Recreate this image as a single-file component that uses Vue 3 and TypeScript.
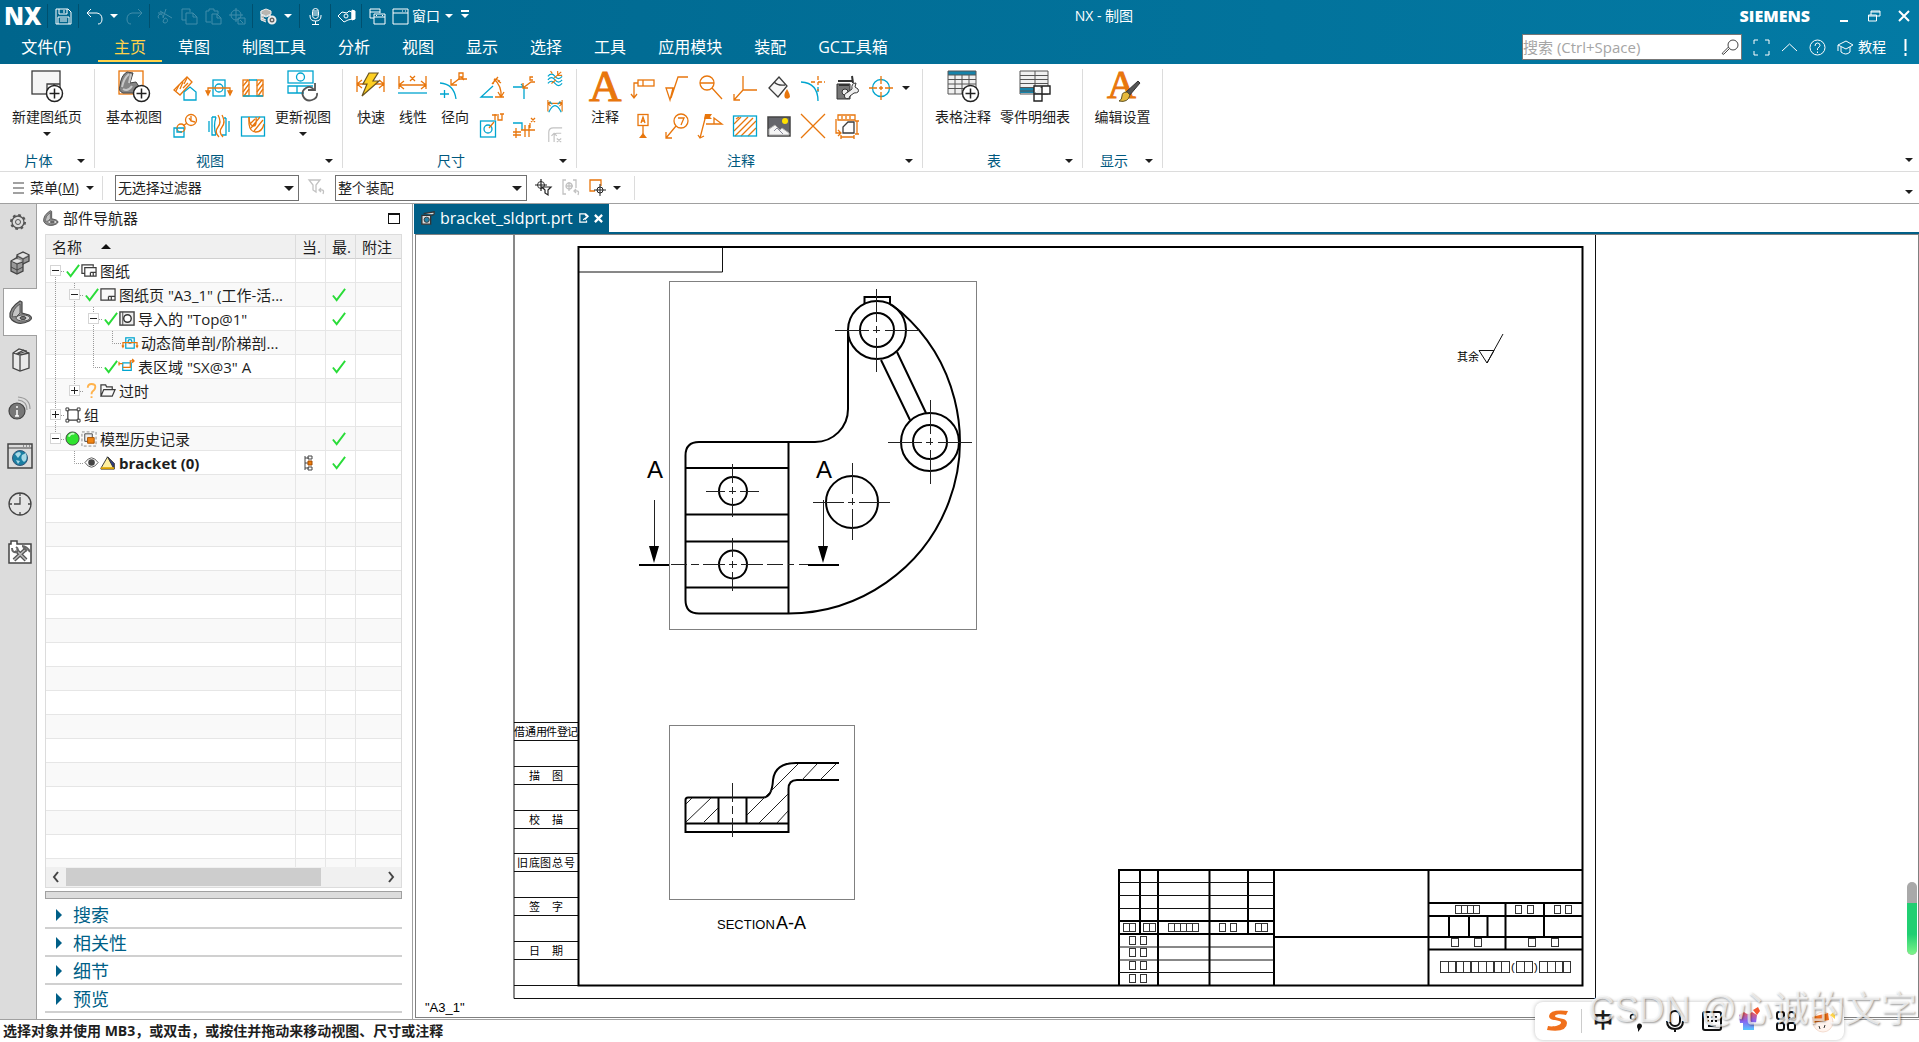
<script setup lang="ts">
import { ref } from 'vue'

const O = 'stroke="#e8760c" stroke-width="1.3"'
const B = 'stroke="#00a5cf" stroke-width="1.3"'
const D = 'stroke="#3c3c3c" stroke-width="1.3"'
const G = 'stroke="#c2c2c2" stroke-width="1.3"'
const OF = 'fill="#e8760c" stroke="none"'

const icons: Record<string, string> = {
  save: '<path d="M1 1h12l3 3v12H1zM4 1v5h8V1M9 2v3M3 16V9h11v7M5 11h7M5 13h7"/>',
  undo: '<path d="M5 1L1 5l4 4M1 5h10q5 1 5 6t-4 5"/>',
  redo: '<path d="M12 1l4 4-4 4M16 5H6q-5 1-5 6t4 5"/>',
  cut: '<path d="M3 3l12 7M9 1l-3 9M6 9.500a2.500 2.500 0 1 0-4 1M8 10a2.500 2.500 0 1 1-2 4q0-2 2-4M1 5h5"/>',
  copy: '<path d="M5 12H1V1h8v3M5 5h7l4 4v7H5zM12 5v4h4"/>',
  paste: '<path d="M6 14H1V3h3V1h5v2h4v3M7 6h5l4 4v6H7zM12 6v4h4"/>',
  target: '<circle cx="7" cy="7" r="5"/><path d="M0 7h14M7 0v14M9 10h7v6H9zM11 12l3 3"/>',
  assembly: '<path d="M1 3l5-2 5 2v3l-5 2-5-2zM1 7l5 2 5-2M1 10l5 2M1 3v9l5 2" fill="#b9b5b0" stroke="#eee" stroke-width="1"/><circle cx="12" cy="12" r="3.500" fill="#666" stroke="#eee" stroke-width="2"/><circle cx="12" cy="12" r="1" fill="#fff" stroke="none"/>',
  mic: '<rect x="5.500" y="0.500" width="6" height="10" rx="3"/><path d="M3 7v1q0 5 5.500 5T14 8V7M8.500 13v3.500M5 16.500h7M6 3h5M6 5h5M6 7h5"/>',
  touch: '<path d="M0 8l4-4 5 1 2-2 3 1v7l-4 1-4 2-3-3z"/><path d="M14 2l3 1v8l-3 1z" fill="#fff"/><circle cx="8" cy="8" r="2"/>',
  windows: '<path d="M5 10H1V1h10v4M1 4h10M5 6h11v10H5zM5 9h11M7 7.500h1M13 7.500h1"/>',
  window: '<path d="M1 1h15v15H1zM1 5h15M10 3h1M13 3h1"/>',
  zoomer: '<circle cx="11" cy="6" r="5"/><path d="M7.500 9.500L2 15q-1 1-1.500 0t.5-1.500L6.500 8"/>',
  full: '<path d="M1 5V1h4M12 1h4v4M16 12v4h-4M5 16H1v-4"/>',
  up: '<path d="M1 12l7.500-7 7.500 7"/>',
  cap: '<path d="M1 6l8-4 7 4-7 4zM4 8v5q5 4 9 0V8M1 6v6"/>',
  newsheet: `<rect x="1" y="1" width="28" height="23" fill="#f5f5f5" ${D}/><path d="M16 24V14h13M16 19h13M23 14v10" ${D}/><circle cx="23.500" cy="23.500" r="8" fill="#fff" stroke="#222" stroke-width="1.500"/><path d="M18.500 23.500h10M23.500 18.500v10" stroke="#222" stroke-width="1.500"/>`,
  baseview: `<rect x="1" y="1" width="24" height="23" ${O}/><path d="M2 16Q3 5 9 2l6 1-3 10 6-1 4 6-5 5H5q-5-2-3-7z" fill="#858585" stroke="#444"/><path d="M4 17Q6 8 11 4M5 19q5 3 9-3M13 4l-2 9" stroke="#c8c8c8" stroke-width="2"/><circle cx="23.500" cy="23.500" r="8" fill="#fff" stroke="#222" stroke-width="1.500"/><path d="M18.500 23.500h10M23.500 18.500v10" stroke="#222" stroke-width="1.500"/>`,
  update: `<rect x="1" y="1" width="25" height="12" ${B}/><circle cx="13.500" cy="7" r="4" ${B}/><path d="M17 23H1v-7h25M10 16v7" ${B}/><path d="M28 13v7h-7M27 20q-3-5-8-2t-3 8q3 6 9 4t5-7" stroke="#555" stroke-width="1.800"/>`,
  v1: `<path d="M1 14L14 1l5 5L7 19z" ${O}/><path d="M3 15l3-6M7 13l3-7M11 8l3-6M15 7l-5 5" ${O}/><path d="M11 24v-8l6-5 6 5v8z" fill="#fff" ${B}/>`,
  v2: `<rect x="6" y="4" width="12" height="16" ${B}/><circle cx="12" cy="12" r="4" ${B}/><path d="M1 17v-5h22v5M-1 15l2 4 2-4zM21 15l2 4 2-4z" ${O}/>`,
  v3: `<rect x="2" y="4" width="6" height="16" ${O}/><rect x="16" y="4" width="6" height="16" ${O}/><path d="M2 10l5-6M2 16L8 8M3 20l5-7M16 10l5-6M16 16l6-8M17 20l5-7" ${O}/><path d="M8 4h8M2 20h20" ${B}/>`,
  v4: `<path d="M1 23V14h10v9z" ${B}/><circle cx="8" cy="14" r="4" ${O}/><circle cx="18" cy="6" r="5.500" ${O}/><path d="M10 12l4-3M18 2v5l4 1M16 4l2 3" ${O}/><path d="M4 14v4h5" ${B}/>`,
  v5: `<path d="M2 7v11M5 3v18h4M5 3h4M9 3q-3 9 0 18M22 7v11M19 4v17h-4M19 4h-2" ${B}/><path d="M11 1q4 7 0 12t1 10M15 1q4 7 0 12t1 10" ${O}/>`,
  v6: `<rect x="0.500" y="3" width="23" height="19" ${B}/><path d="M8 3v7q1 8 7 8t8-8" ${O}/><path d="M8 3q0 8 4 9t3-9M9 10l5-5M10 14l9-11M13 17L22 6" ${O}/>`,
  rapid: `<path d="M1 6v16M28 6v16M1 14h27M6 10l-5 4 5 4M23 10l5 4-5 4" ${O}/><path d="M13 3h9l-5 8h6L6 26l5-12H7z" fill="#ffd022" stroke="#6a5520" stroke-width="1.200"/>`,
  linear: `<path d="M1 6v13M28 6v13M1 15h27M6 11l-5 4 5 4M23 11l5 4-5 4M12 6l5 5M17 6l-5 5" ${O}/><path d="M0 23h29" ${B}/>`,
  radial: `<path d="M1 13q14 1 16 16M1 24h9M5.500 20v8" ${B}/><path d="M12 15l8-6h8M12 9v6h6" ${O}/><path d="M20 10V3h4v4h-4M22 7l3 3" ${O}/>`,
  d1: `<path d="M13 10L1 21h12" ${B}/><path d="M14 3q8 7 7 18M12 8l6-7M15 21h9M18 5l3 2M18 16l3 5 3-5M13 8l2-5 5 2" ${O}/>`,
  d2: `<path d="M1 11h11v12M12 11l-3-3" ${B}/><path d="M11 12l8-6h4M11 7v5h5M21 1h-3v3h3" ${O}/>`,
  d3: `<path d="M1 6q4-5 8 0t8 0M1 10q4-5 8 0t8 0M1 14q4-5 8 0t8 0" ${B}/><path d="M8 8l8-7M12 0v5h5M4 0l2 3M5 14l5-4" ${O}/>`,
  d4: `<rect x="0.500" y="7" width="15" height="16" ${B}/><circle cx="8" cy="15" r="4" ${B}/><path d="M9 14l5-6M15 0v6M18 0v6h4V0M12 1h5M20 0h4" ${O}/>`,
  d5: `<path d="M1 9h9v7" ${B}/><path d="M9 16h14M13 11v12M17 11v12M1 18h8M1 21h8M4 14v10M18 9v5M19 4l4 4M23 4l-4 4" ${O}/>`,
  d6: `<path d="M1 1v13M17 1v13M1 5h16M4 3L1 5l3 3M14 3l3 2-3 3" ${O}/><path d="M2 15Q9 0 16 15M6 6L3 3M12 6l3-3" ${B}/>`,
  d7: `<path d="M2 17V6q0-5 5-5h10M8 17V10q0-3 3-3h5M5 10l3-3 3 3M11 13l5 4M16 13l-5 4" ${G}/>`,
  bigA: '<text x="0" y="31" font-family="Liberation Serif" font-size="45" fill="#e8760c" stroke="#e8760c" stroke-width="1">A</text>',
  n1: `<rect x="7" y="4" width="16" height="6" ${O}/><path d="M7 7H3v14M0 18l3 4 3-4M12 4v6" ${O}/>`,
  n2: `<path d="M1 12h7L5 24zM6 22L13 1h10" ${O}/>`,
  n3: `<circle cx="8" cy="7" r="7" ${O}/><path d="M1 7h14M13 12l10 11" ${O}/>`,
  n4: `<path d="M10 0v14h14M10 14L1 24M1 18v6h6" ${O}/>`,
  n5: `<path d="M2 12L12 1l8 9-9 11z" fill="#f7f7f7" ${D}/><path d="M7 6q4 4 11 3" ${D}/><path d="M20 13q-4 6-2 9 3 2 5-1 0-3-3-8z" ${OF}/>`,
  n6: `<path d="M0 6q17 1 17 19M17 11v5" ${B}/><path d="M17 0v9M10 6h4M17 6h7M17 13v2" ${O} stroke-dasharray="4 2"/>`,
  n7: '<path d="M2 8h13v15H2z" fill="#777" stroke="#333"/><path d="M3 5h14M17 0l1 7M4 9h10" stroke="#333" stroke-width="2"/><circle cx="10" cy="16" r="3" fill="#eee" stroke="#333"/><path d="M10 22q-2-4 3-6l4-3q-1-6 4-6l-1 4 3 2q2 4-4 4l-4 3q-1 4-5 2z" fill="#eee" stroke="#333"/>',
  n8: `<circle cx="12" cy="12" r="8.500" ${B}/><path d="M0 12h8M16 12h8M12 0v8M12 16v8M10 12h4M12 10v4" ${O}/>`,
  n9: `<rect x="7" y="0.500" width="10" height="11" ${O}/><path d="M12 12v8M10 9l2-6 2 6M10 7h4" ${O}/><path d="M8 24l4-5 4 5z" ${OF}/>`,
  n10: `<circle cx="16" cy="7" r="7" ${O}/><path d="M13 4h6l-3 7M11 12L1 24M1 18v6h6" ${O}/>`,
  n11: `<path d="M7 1L1 24M-1 21l2 3 4-2M7 10h16L15 4v6" ${O}/><path d="M6 0h7l-2 3 2 2H5z" ${OF}/>`,
  n12: `<path d="M1 10l7-7M1 17L15 3M2 22L20 4M8 22L23 7M15 22l8-8M3 5l3-2" ${O}/><rect x="0.500" y="2" width="23" height="20" ${B}/>`,
  n13: '<rect x="1" y="3" width="22" height="19" fill="#65666c" stroke="#444" stroke-width="1.500"/><circle cx="18" cy="7" r="3" fill="#ffe100" stroke="none"/><path d="M2 21v-6l6-4 5 5 2-2 7 5v2z" fill="#f5f5f5" stroke="#aaa"/><path d="M7 17l3-3 6 6" stroke="#889"/>',
  n14: `<path d="M0 0l24 24M24 0L0 24" ${O}/>`,
  n15: `<path d="M3 1h17v5H3zM7 2v3M11 2v3M15 2v3M1 5v14h5M3 16l3 3-3 3M22 7v13M20 7h4M20 20h4M6 23h13M6 21v4M19 21v4" ${O}/><path d="M8 19v-6l5-5h6v11z" ${D}/>`,
  table: '<path d="M1 1h28v23H1z" fill="#f0f0f0"/><path d="M1 1h28v4H1z" fill="#1683aa"/><path d="M1 1h28v23H1zM1 5h28M1 9.500h28M1 14h28M1 18.500h28M8 5v19M15 5v19M22 5v19" stroke="#555"/><circle cx="23.500" cy="23.500" r="8" fill="#fff" stroke="#222" stroke-width="1.500"/><path d="M18.500 23.500h10M23.500 18.500v10" stroke="#222" stroke-width="1.500"/>',
  parts: '<path d="M1 1h28v23H1z" fill="#f0f0f0" stroke="#555"/><path d="M1 17h16v6H1z" fill="#1683aa"/><path d="M1 5.500h28M1 9.500h28M1 13.500h28M1 17.500h28M1 21h16M16 1v22" stroke="#555"/><path d="M15 16h16v8h-8v7h-8zM15 24h8V16" fill="#fff" stroke="#222" stroke-width="1.400"/>',
  settings: '<text x="0" y="28" font-family="Liberation Serif" font-size="40" fill="#e8760c" stroke="#e8760c">A</text><path d="M31 11l2 2-11 13-4-3z" fill="#555" stroke="#333"/><path d="M20 22l3 3q-2 8-11 6 3-1 3-5t5-4z" fill="#e5b93c" stroke="#5f5122"/>',
  menu: '<path d="M1 3h11M1 8h11M1 13h11" stroke="#444" stroke-width="1.200"/>',
  filter: `<path d="M1 1h11L8 6v7l-3-2V6zM15 15q2-5-3-4M13 9l-2 2 2 2" ${G}/>`,
  f1: '<circle cx="6" cy="6" r="3.500" stroke="#333"/><path d="M0 6h12M6 0v12M7 8h9l-3 3v5l-3-2v-3z" fill="#fff" stroke="#222" stroke-width="1.200"/>',
  f2: `<path d="M4 1H1v14h3M11 1h3v8M4 7h7M7 3v9M16 16q2-5-3-4M14 10l-2 2 2 2" ${G}/><circle cx="7" cy="7" r="3" ${G}/>`,
  f3: `<path d="M6 12H1V1h11v6" ${O}/><circle cx="11" cy="11" r="3" stroke="#222"/><path d="M5 11h12M11 5v12" stroke="#222"/>`,
  check: '<path d="M2 9l4 5L15 2" stroke="#29dc38" stroke-width="2"/>',
  sheets: `<path d="M4 11H1V2h12v2M4 5h12v9H4zM10 10h6M13 10v4M10 10v4" ${D}/>`,
  sheet: `<path d="M1 2h15v12H1zM9 10h7M9 10v4M12 10v4" ${D}/>`,
  imported: '<rect x="1" y="1" width="15" height="14" fill="#eee" stroke="#444" stroke-width="1.500"/><path d="M4 1v14" stroke="#444"/><circle cx="9" cy="8" r="4" fill="#fff" stroke="#333" stroke-width="1.500"/>',
  section: `<rect x="4" y="3" width="9" height="11" ${B}/><circle cx="8.500" cy="7" r="2" ${B}/><path d="M1 12V8h15v4M0 11l1 2 1-2M15 11l1 2 1-2" ${O}/>`,
  region: `<path d="M4 12V4h9v8z" ${B}/><path d="M0 5h4M0 3v4M4 9h8V2h4M14 0l2 2-2 2" ${O}/>`,
  question: '<path d="M4 5q0-4 4-4t4 3q0 3-3 5-1 1-1 3M8 14v2" stroke="#ffb34d" stroke-width="2"/>',
  folder: `<path d="M1 14V2h5l1 2h6v3M1 14L4 7h12l-3 7z" ${D}/>`,
  group: `<path d="M3 3h11v11H3z" ${D}/><path d="M1 1h3v3H1zM13 1h3v3h-3zM1 13h3v3H1zM13 13h3v3h-3z" fill="#fff" stroke="#333"/>`,
  ball: '<circle cx="8" cy="8" r="7" fill="#2fe32f" stroke="#444"/><path d="M4 6q2-4 6-3" stroke="#c5ffc5" stroke-width="2"/>',
  history: '<path d="M1 1h15v15H1z" stroke="#888" stroke-dasharray="3 2"/><path d="M4 3h8v8H4z" fill="#eee" stroke="#444"/><path d="M7 7h7v6H7z" fill="#f28511" stroke="#a55000"/>',
  eye: '<path d="M1 8q7-10 14 0-7 10-14 0z" fill="#fff" stroke="#555"/><circle cx="8" cy="8" r="3.500" fill="#444" stroke="none"/>',
  cone: '<path d="M1 14L8 2l7 7v6H1z" fill="#fff0a0" stroke="#333"/><path d="M8 2l7 7v6z" fill="#2b3d92" stroke="#333"/><path d="M1 14h14" stroke="#d9a000" stroke-width="2"/>',
  tree: '<path d="M2 1v14M2 3h4M2 8h4M2 13h4M5 1h4v3H5zM5 12h4v3H5z" stroke="#444"/><path d="M5 6h4v4H5z" fill="#ee7d0a" stroke="#a04b00"/>',
  gear: '<circle cx="12" cy="12" r="6" stroke="#555" stroke-width="1.300"/><circle cx="12" cy="12" r="7" stroke="#555" stroke-width="2" stroke-dasharray="2.750 2.750"/><circle cx="12" cy="12" r="2.500" stroke="#555"/>',
  cubes: '<path d="M3 9l5-3 1-1 0-2 6-3 6 3v6l-6 3v7l-6 3-6-3z" fill="#999" stroke="#444" stroke-width="1.300"/><path d="M3 9l6 3 6-2M9 12v10M3 15l6 3 6-3M9 4l6 3 6-3M15 7v6M9 4v4" stroke="#444"/><path d="M4 9l5-2 5 2-5 2zM10 3l5-2 5 2-5 3z" fill="#e4e4e4"/>',
  nav: '<path d="M1 17Q0 8 11 1l2 1v11l7 2q5 3 0 6-10 5-17-1z" fill="#8d8d8d" stroke="#444" stroke-width="1.200"/><path d="M3 17Q4 8 11 4v9q-3 5-8 4z" fill="#c4c4c4" stroke="#555"/><ellipse cx="14" cy="18" rx="7" ry="3" fill="#d8d8d8" stroke="#555"/><ellipse cx="14" cy="18" rx="3" ry="1.500" fill="#777" stroke="#444"/>',
  books: '<path d="M5 5l6-4 7 2v1l3 1v15l-9 3-7-3z" fill="#e9e9e9" stroke="#444" stroke-width="1.300"/><path d="M5 5l7 2 9-2M12 7v16M8 6l8-4M10 6l9-3" stroke="#444" stroke-width="1.300"/>',
  info: '<circle cx="9" cy="15" r="8" fill="#777" stroke="#444" stroke-width="1.200"/><path d="M9 10v2M9 14v6M7 20h4" stroke="#fff" stroke-width="1.500"/><path d="M10 4q9 1 9 10M10 1q12 1 12 12" stroke="#999" stroke-width="1.200"/>',
  web: '<path d="M0 0h24v24H0z" fill="#dcdcdc" stroke="#444" stroke-width="1.500"/><path d="M0 4h24M15 2h1M18 2h1M21 2h1" stroke="#444"/><circle cx="12" cy="14" r="7.500" fill="#1b7fa3" stroke="#357"/><path d="M7 10q5-4 6 0l-3 4zM14 11l4-2q2 7-2 9-4-3-2-7zM8 16l4 1-2 3z" fill="#a9d9e6"/>',
  clock: '<circle cx="12" cy="12" r="11" fill="#e4e4e4" stroke="#444" stroke-width="1.300"/><path d="M12 1v3M12 20v3M1 12h3M20 12h3M12 5v7H6" stroke="#444" stroke-width="1.300"/>',
  tools: '<path d="M1 4h2V1h6v3h14v19H1z" fill="#fff" stroke="#444" stroke-width="1.500"/><path d="M6 20L18 9M18 20L8 10" stroke="#555" stroke-width="4"/><path d="M6 20L18 9M18 20L8 10" stroke="#bbb" stroke-width="1.500"/><path d="M4 8q0 5 5 4 2-3-1-5M14 6q5 0 8 6M15 7l4 4" stroke="#666" stroke-width="2"/>',
  doc: '<path d="M1 5h10v10H1zM3 3l12-2v3M12 5l3-1" fill="#ddd" stroke="#333" stroke-width="1.500"/><circle cx="6.500" cy="10" r="3" fill="#2584a8" stroke="#333"/>',
}

const tabs = ['主页', '草图', '制图工具', '分析', '视图', '显示', '选择', '工具', '应用模块', '装配', 'GC工具箱']
const active = ref('主页')

const viewTools = ['v1', 'v2', 'v3', 'v4', 'v5', 'v6']
const noteTools = ['n1', 'n2', 'n3', 'n4', 'n5', 'n6', 'n7', 'n8', 'n9', 'n10', 'n11', 'n12', 'n13', 'n14', 'n15']
const rail = ['gear', 'cubes', 'nav', 'books', 'info', 'web', 'clock', 'tools']

interface Row { level: number; exp?: string; icons: string[]; text: string; ok?: boolean; bold?: boolean }
const rows: Row[] = [
  { level: 0, exp: '-', icons: ['check', 'sheets'], text: '图纸' },
  { level: 1, exp: '-', icons: ['check', 'sheet'], text: '图纸页 "A3_1" (工作-活...', ok: true },
  { level: 2, exp: '-', icons: ['check', 'imported'], text: '导入的 "Top@1"', ok: true },
  { level: 3, icons: ['section'], text: '动态简单剖/阶梯剖...' },
  { level: 2, icons: ['check', 'region'], text: '表区域 "SX@3" A', ok: true },
  { level: 1, exp: '+', icons: ['question', 'folder'], text: '过时' },
  { level: 0, exp: '+', icons: ['group'], text: '组' },
  { level: 0, exp: '-', icons: ['ball', 'history'], text: '模型历史记录', ok: true },
  { level: 1, icons: ['eye', 'cone'], text: 'bracket (0)', ok: true, bold: true },
]
const sections = ['搜索', '相关性', '细节', '预览']

const sideCells = [
  { y: 723, chars: [['借', 514], ['通', 525], ['用', 536], ['件', 546], ['登', 557], ['记', 567]] },
  { y: 767, chars: [['描', 529], ['图', 552]] },
  { y: 811, chars: [['校', 529], ['描', 552]] },
  { y: 854, chars: [['旧', 517], ['底', 529], ['图', 540], ['总', 552], ['号', 564]] },
  { y: 898, chars: [['签', 529], ['字', 552]] },
  { y: 942, chars: [['日', 529], ['期', 552]] },
]

const box = (y: number, w: number, h: number, xs: number[]) => xs.map((x) => ({ x, y, w, h }))
const blanks = [
  ...box(924, 6, 8, [1124, 1130, 1144, 1150, 1169, 1175, 1181, 1187, 1193, 1220, 1231, 1256, 1262]),
  ...[937, 949, 962, 975].flatMap((y) => box(y, 6, 8, [1130, 1141])),
  ...box(906, 6, 8, [1456, 1462, 1468, 1474, 1516, 1528, 1555, 1566]),
  ...box(939, 7, 8, [1452, 1475, 1529, 1552]),
  ...box(962, 8, 11, [1441, 1449, 1456, 1464, 1471, 1479, 1487, 1494, 1502, 1517, 1525, 1540, 1548, 1556, 1563]),
]
</script>

<template>
  <div class="app">
    <header class="top">
      <div class="titlebar">
        <div class="quick">
          <span class="nx">NX</span><i class="sep" />
          <button class="q" aria-label="保存"><svg viewBox="0 0 17 17" v-html="icons.save" /></button><i class="sep" />
          <button class="q" aria-label="撤销"><svg viewBox="0 0 17 17" v-html="icons.undo" /></button><i class="caret w" />
          <button class="q dim" aria-label="重做"><svg viewBox="0 0 17 17" v-html="icons.redo" /></button><i class="sep" />
          <button v-for="n in ['cut', 'copy', 'paste', 'target']" :key="n" class="q dim" :aria-label="n"><svg viewBox="0 0 17 17" v-html="icons[n]" /></button>
          <i class="sep" />
          <button class="q" aria-label="装配"><svg viewBox="0 0 17 17" v-html="icons.assembly" /></button><i class="caret w" /><i class="sep" />
          <button class="q" aria-label="语音"><svg viewBox="0 0 17 17" v-html="icons.mic" /></button><i class="sep" />
          <button class="q" aria-label="触控"><svg viewBox="0 0 17 17" v-html="icons.touch" /></button><i class="sep" />
          <button class="q" aria-label="切换窗口"><svg viewBox="0 0 17 17" v-html="icons.windows" /></button>
          <button class="q win"><svg viewBox="0 0 17 17" v-html="icons.window" />窗口<i class="caret w" /></button>
          <i class="caret w bar" />
        </div>
        <div class="apptitle">NX - 制图</div>
        <div class="wincontrols">
          <span class="siemens">SIEMENS</span>
          <button aria-label="最小化"><svg viewBox="0 0 12 12"><path d="M2 11h8" stroke-width="2" /></svg></button>
          <button aria-label="还原"><svg viewBox="0 0 12 12"><path d="M3 5V1h9v5H9M0.500 5h8v6h-8zM3 2h9M1 6h7" /></svg></button>
          <button aria-label="关闭"><svg viewBox="0 0 12 12"><path d="M1 1l10 10M11 1L1 11" stroke-width="2" /></svg></button>
        </div>
      </div>
      <nav class="tabs">
        <button class="tab file">文件(F)</button>
        <button v-for="t in tabs" :key="t" class="tab" :class="{ on: t === active }" @click="active = t">{{ t }}</button>
        <div class="utils">
          <label class="search"><input type="text" placeholder="搜索 (Ctrl+Space)" aria-label="搜索" /><svg viewBox="0 0 17 17" v-html="icons.zoomer" /></label>
          <button aria-label="全屏"><svg viewBox="0 0 17 17" v-html="icons.full" /></button>
          <button aria-label="收起"><svg viewBox="0 0 17 17" v-html="icons.up" /></button>
          <button aria-label="帮助"><svg viewBox="0 0 17 17"><circle cx="8.500" cy="8.500" r="7.500" /><path d="M6 7q0-3 2.500-3T11 6.500q0 1-2.500 3V11M8.500 12.500V14" /></svg></button>
          <button class="learn"><svg viewBox="0 0 17 17" v-html="icons.cap" />教程</button>
          <button aria-label="提醒"><svg viewBox="0 0 17 17"><path d="M8.500 0v12M8.500 14v3" stroke-width="2" /></svg></button>
        </div>
      </nav>
    </header>

    <section class="ribbon">
      <div class="group g1">
        <div class="body"><button class="big w95"><svg viewBox="0 0 32 32" v-html="icons.newsheet" />新建图纸页<i class="caret" /></button></div>
        <div class="foot"><span>片体</span><i class="caret" /></div>
      </div>
      <div class="group g2">
        <div class="body">
          <button class="big w72"><svg viewBox="0 0 32 32" v-html="icons.baseview" />基本视图</button>
          <div class="grid c3"><button v-for="n in viewTools" :key="n" :aria-label="n"><svg viewBox="0 0 24 24" v-html="icons[n]" /></button></div>
          <button class="big w66"><svg viewBox="0 0 32 32" v-html="icons.update" />更新视图<i class="caret" /></button>
        </div>
        <div class="foot"><span>视图</span><i class="caret" /></div>
      </div>
      <div class="group g3">
        <div class="body">
          <button class="big w42"><svg viewBox="-1 0 32 32" v-html="icons.rapid" />快速</button>
          <button class="big w42"><svg viewBox="-1 0 32 32" v-html="icons.linear" />线性</button>
          <button class="big w42"><svg viewBox="0 0 32 32" v-html="icons.radial" />径向</button>
          <div class="grid c2"><button v-for="n in ['d1', 'd2', 'd4', 'd5']" :key="n" :aria-label="n"><svg viewBox="0 0 24 24" v-html="icons[n]" /></button></div>
          <div class="stack"><button v-for="n in ['d3', 'd6', 'd7']" :key="n" :aria-label="n"><svg viewBox="0 0 18 18" v-html="icons[n]" /></button></div>
        </div>
        <div class="foot"><span>尺寸</span><i class="caret" /></div>
      </div>
      <div class="group g4">
        <div class="body">
          <button class="big w48"><svg viewBox="0 0 32 32" v-html="icons.bigA" />注释</button>
          <div class="grid c8"><button v-for="n in noteTools" :key="n" :aria-label="n"><svg viewBox="0 0 24 24" v-html="icons[n]" /></button></div>
          <i class="caret mid" />
        </div>
        <div class="foot"><span>注释</span><i class="caret" /></div>
      </div>
      <div class="group g5">
        <div class="body">
          <button class="big w72"><svg viewBox="0 0 32 32" v-html="icons.table" />表格注释</button>
          <button class="big w72"><svg viewBox="0 0 32 32" v-html="icons.parts" />零件明细表</button>
        </div>
        <div class="foot"><span>表</span><i class="caret" /></div>
      </div>
      <div class="group g6">
        <div class="body"><button class="big w80"><svg viewBox="0 0 32 32" v-html="icons.settings" />编辑设置</button></div>
        <div class="foot"><span>显示</span><i class="caret" /></div>
      </div>
      <div class="rest"><i class="caret" /></div>
    </section>

    <section class="selbar">
      <button class="menubtn"><svg viewBox="0 0 16 16" v-html="icons.menu" /><span>菜单(<u>M</u>)</span><i class="caret" /></button>
      <i class="vsep" />
      <div class="pick p1"><select aria-label="选择过滤器"><option>无选择过滤器</option></select><i class="caret" /></div>
      <button class="s" aria-label="重置过滤器"><svg viewBox="0 0 17 17" v-html="icons.filter" /></button>
      <div class="pick p2"><select aria-label="选择范围"><option>整个装配</option></select><i class="caret" /></div>
      <button class="s" aria-label="捕捉过滤"><svg viewBox="0 0 17 17" v-html="icons.f1" /></button>
      <button class="s" aria-label="捕捉重置"><svg viewBox="0 0 17 17" v-html="icons.f2" /></button>
      <button class="s end" aria-label="区域选择"><svg viewBox="0 0 17 17" v-html="icons.f3" /></button>
      <i class="caret" /><i class="vsep far" />
      <i class="caret last" />
    </section>

    <main class="work">
      <aside class="rail">
        <button v-for="n in rail" :key="n" :class="{ sel: n === 'nav', opt: n === 'gear' }" :aria-label="n"><svg viewBox="0 0 24 24" v-html="icons[n]" /></button>
      </aside>

      <section class="panel">
        <div class="phead"><svg viewBox="0 0 24 24" v-html="icons.nav" /><h2>部件导航器</h2><button aria-label="最大化" class="maxi" /></div>
        <div class="treebox">
          <div class="treeview">
            <table>
              <colgroup><col /><col class="c30" /><col class="c30" /><col class="c46" /></colgroup>
              <thead><tr><th>名称<i class="caret asc" /></th><th>当.</th><th>最.</th><th>附注</th></tr></thead>
              <tbody>
                <tr v-for="(r, i) in rows" :key="i">
                  <td>
                    <div class="node" :style="{ paddingLeft: 4 + r.level * 19 + 'px' }">
                      <span class="exp" :class="{ box: r.exp, plus: r.exp === '+' }" />
                      <svg v-for="n in r.icons" :key="n" viewBox="0 0 17 17" v-html="icons[n]" />
                      <span class="name" :class="{ bold: r.bold }">{{ r.text }}</span>
                    </div>
                  </td>
                  <td><svg v-if="r.bold" class="cell" viewBox="0 0 12 16" v-html="icons.tree" /></td>
                  <td><svg v-if="r.ok" class="cell" viewBox="0 0 17 17" v-html="icons.check" /></td>
                  <td />
                </tr>
                <tr v-for="k in 40" :key="'e' + k"><td /><td /><td /><td /></tr>
              </tbody>
            </table>
            <svg class="links" width="90" height="216" viewBox="1 0 90 216">
              <path d="M10.500 18V150M10.500 162V174M29.500 24V30M29.500 42V126M48.500 48V54M48.500 66V108.500H58M67.500 72V84.500H77M29.500 192V204.500H39M16 12.500h4M35 36.500h4M54 60.500h4M35 132.500h4M16 156.500h4M16 180.500h4" />
            </svg>
          </div>
          <div class="hscroll">
            <svg viewBox="0 0 8 12"><path d="M6 1L2 6l4 5" /></svg><span class="track"><i /></span><svg viewBox="0 0 8 12"><path d="M2 1l4 5-4 5" /></svg>
          </div>
        </div>
        <div class="splitter" />
        <button v-for="s in sections" :key="s" class="acc"><i />{{ s }}</button>
      </section>

      <section class="view">
        <div class="doctabs">
          <div class="doctab">
            <svg viewBox="0 0 16 16" v-html="icons.doc" /><span>bracket_sldprt.prt</span>
            <svg class="sm" viewBox="0 0 12 12"><path d="M7 1H1v10h8V9M7 1l2 3M5 8l6-4M7 1h1l3 3-4 4" stroke="#fff" stroke-width="1.500" /></svg>
            <button aria-label="关闭文档"><svg viewBox="0 0 10 10"><path d="M1 1l8 8M9 1L1 9" stroke="#fff" stroke-width="2.500" /></svg></button>
          </div>
        </div>
        <div class="canvas">
          <svg class="sheet" viewBox="416 235 1502 782" preserveAspectRatio="xMinYMin meet">
            <g class="thin">
              <path d="M514 235V998.500H1595.500V235" />
              <path d="M578 272H722.500V247" />
              <path v-for="c in sideCells" :key="c.y" :d="`M514 ${c.y - 0.5}h64M514 ${c.y + 17.5}h64`" />
              <path d="M514 985.500h64" />
            </g>
            <rect class="bold2" x="578.500" y="247" width="1004" height="738.500" />
            <g class="cad">
              <template v-for="c in sideCells" :key="c.y"><text v-for="(ch, k) in c.chars" :key="k" :x="ch[1]" :y="c.y + 13">{{ ch[0] }}</text></template>
              <text x="1457" y="361">其</text><text x="1468" y="361">余</text>
            </g>
            <path class="thin" d="M1479 350.500h15L1487 363zM1487 363L1503 334" />

            <rect class="frame" x="669.500" y="281.500" width="307" height="348" />
            <g class="obj">
              <circle cx="877" cy="330" r="29" /><circle cx="877" cy="330" r="17" />
              <circle cx="930" cy="442" r="29" /><circle cx="930" cy="442" r="17" />
              <circle cx="852" cy="502" r="26" />
              <circle cx="733" cy="491" r="14" /><circle cx="733" cy="564.500" r="14" />
              <path d="M848 330V409A33 33 0 0 1 815 442H699Q685.500 442 685.500 455.500V600Q685.500 613.500 699 613.500H788.500A172 172 0 0 0 901 312L890 304" />
              <path d="M864.500 304V297H890V304M788.500 442V613.500M685.500 468H788.500M685.500 514.500H788.500M685.500 541.500H788.500M685.500 587.500H788.500M881 360L910 420M897 352L926 413" />
            </g>
            <g class="center">
              <path d="M835 330.500h34M873 330.500h7M885 330.500h34M876.500 289v33M876.500 326v7M876.500 338v34" />
              <path d="M888 442.500h34M926 442.500h7M938 442.500h34M930.500 400v34M930.500 438v7M930.500 450v34" />
              <path d="M813 502.500h31M848 502.500h7M859 502.500h31M852.500 463v31M852.500 498v7M852.500 509v31" />
              <path d="M706 491.500h19M729 491.500h7M740 491.500h19M732.500 464v19M732.500 487v7M732.500 498v19" />
              <path d="M732.500 538v19M732.500 561v7M732.500 572v19" />
              <path d="M671 564.500h16M691 564.500h8M703 564.500h22M729 564.500h8M741 564.500h22M767 564.500h16M788 564.500h6M799 564.500h9" />
              <path d="M654.500 500V548M823.500 500V548" />
            </g>
            <path class="bold2" d="M639 565h30M808 565h31" />
            <path d="M649 546h10L654 563zM818 546h10L823 563z" />
            <text class="arial" x="647" y="478" font-size="24">A</text>
            <text class="arial" x="816" y="478" font-size="24">A</text>

            <rect class="frame" x="669.500" y="725.500" width="185" height="174" />
            <g class="obj">
              <path d="M839 763H796Q775 763 773 780Q772 797.500 763 797.500H688Q685.500 797.500 685.500 800V832H788.500V789Q788.500 780 797 780H839M685.500 823.500H788.500M718.500 797.500V823.500M746.500 797.500V823.500" />
            </g>
            <g class="center">
              <path d="M732.500 783v19M732.500 806v8M732.500 818v19" />
              <path d="M686 804l6-6M686 822l25-24M704 822l14-14M747 815l51-51M759 823l29-29M777 823l11-12M802 780l15-16M820 780l16-16" />
            </g>
            <text class="arial" x="717" y="929" font-size="13">SECTION</text>
            <text class="arial" x="776" y="929" font-size="18">A-A</text>
            <text class="arial" x="425" y="1012" font-size="13">"A3_1"</text>

            <g class="bold2">
              <path d="M1119 985V870H1582M1140 870V934M1158 870V985M1209.500 870V985M1248 870V934M1274 870V985M1428.500 870V985M1119 921H1274M1119 934H1274M1274 937H1582M1428 903H1582M1428 916H1582M1428 949.500H1582M1505.500 903V949M1544 903V937M1449 916V937M1469 916V937M1487.500 916V937" />
            </g>
            <g class="thin"><path d="M1119 882.500H1274M1119 895.500H1274M1119 908.500H1274M1119 947H1274M1119 960H1274M1119 972.500H1274" /></g>
            <g class="thin blank"><rect v-for="(b, k) in blanks" :key="k" :x="b.x - 0.5" :y="b.y - 0.5" :width="b.w" :height="b.h" /></g>
            <text class="arial" x="1511" y="971" font-size="11">(</text><text class="arial" x="1534" y="971" font-size="11">)</text>
          </svg>
          <span class="meter"><i /></span>
        </div>
      </section>
    </main>

    <footer class="status">选择对象并使用 MB3，或双击，或按住并拖动来移动视图、尺寸或注释</footer>

    <div class="ime">
      <svg viewBox="0 0 24 24"><path d="M22 2Q4 0 3 7c0 6 13 3 12 7-1 3-9 4-13 3l-1 4q20 3 20-7c0-6-12-4-12-7 0-2 7-2 11-1z" fill="#f0701c" /></svg>
      <i />
      <span class="zh">中</span>
      <svg viewBox="0 0 24 24"><circle cx="7" cy="8" r="2.500" fill="none" stroke="#111" stroke-width="1.500" /><path d="M11 17a2.500 2.500 0 1 1 4 2l-3 4v-3q-1-1-1-3z" /></svg>
      <svg viewBox="0 0 24 24" class="line"><rect x="7" y="2" width="10" height="15" rx="5" /><path d="M4 12q0 8 8 8t8-8M12 20v3" /></svg>
      <svg viewBox="0 0 24 24" class="line"><rect x="3" y="3" width="18" height="18" rx="2" /><path d="M7 8h2M11 8h2M15 8h2M7 12h2M11 12h2M15 12h2M8 17h8" /></svg>
      <svg viewBox="0 0 24 24"><defs><linearGradient id="shirt" x1="0" y1="0" x2="0" y2="1"><stop offset="0" stop-color="#f05a5a" /><stop offset=".5" stop-color="#8a62f0" /><stop offset="1" stop-color="#55c8ff" /></linearGradient></defs><path d="M2 6l5-3q4 4 8 0l5 3-1 8h-2v7H6v-7H3z" fill="url(#shirt)" /><path d="M16 1l5-3 2 4-3 4z" fill="#f4572e" /></svg>
      <svg viewBox="0 0 24 24" class="line"><rect x="3" y="3" width="7" height="7" rx="2" /><circle cx="17.500" cy="6.500" r="3.500" /><rect x="3" y="14" width="7" height="7" rx="2" /><rect x="14" y="14" width="7" height="7" rx="2" /></svg>
      <svg viewBox="0 0 24 24"><circle cx="12" cy="13" r="10" fill="#fff4ee" stroke="#f5ddd0" /><path d="M1 8l16-4 1 7-16 3z" fill="#f0701c" /><path d="M19 6l5-4v8z" fill="#ffd64a" /><path d="M8 17l1 3M14 16l-1 3" stroke="#333" /></svg>
    </div>
    <div class="mark">CSDN @心诚的文字</div>
  </div>
</template>

<style>
html, body { margin: 0; height: 100%; overflow: hidden; background: #fff; }
</style>

<style scoped>
.app { position: relative; height: 100vh; display: flex; flex-direction: column; font-family: "Open Sans", "Noto Sans CJK SC", sans-serif; font-size: 14px; line-height: 20px; color: #1e1e1e; background: #fff; overflow: hidden; }
.app * { box-sizing: border-box; }
button { border: 0; background: none; padding: 0; margin: 0; font: inherit; color: inherit; }
svg { display: block; fill: none; flex: none; overflow: visible; }
.caret { display: block; flex: none; width: 0; height: 0; border: 4px solid transparent; border-top-color: #1e1e1e; border-bottom: 0; }
.caret.w { border-top-color: #fff; }

.top { background: linear-gradient(90deg, #00658c, #037aa4); color: #fff; flex: none; }
.titlebar { display: flex; height: 32px; align-items: center; }
.quick { display: flex; align-items: center; flex: 0 0 56%; }
.nx { width: 44px; padding-left: 4px; font: 800 24px/32px "Open Sans", sans-serif; }
.sep { width: 1px; height: 24px; background: #00506f; flex: none; margin: 0 3px; }
.q { width: 24px; height: 24px; display: flex; align-items: center; justify-content: center; stroke: #fff; }
.q svg { width: 17px; height: 17px; }
.q.dim { opacity: .25; }
.quick .caret { margin: 0 4px; }
.quick .q.win { width: auto; gap: 3px; margin-left: 3px; }
.quick .win .caret { margin-left: 2px; }
.quick .bar { position: relative; }
.bar::before { content: ""; position: absolute; left: -4px; top: -8px; width: 8px; height: 2px; background: #fff; }
.apptitle { flex: none; }
.wincontrols { flex: 1; display: flex; align-items: center; justify-content: flex-end; gap: 18px; padding-right: 9px; }
.wincontrols svg { width: 12px; height: 12px; stroke: #fff; }
.siemens { font: 800 16px/20px "Open Sans", sans-serif; margin-right: 10px; }
.tabs { display: flex; height: 32px; align-items: center; }
.tab { height: 32px; padding: 0 16px 2px; font-size: 16px; line-height: 24px; white-space: nowrap; }
.tab.file { width: 92px; margin-right: 6px; }
.tab.on { color: #ffd24a; box-shadow: inset 0 -2px 0 #00688f, inset 0 -4px 0 #ffd24a; }
.utils { margin-left: auto; display: flex; align-items: center; gap: 11px; padding: 0 5px 2px 0; }
.utils svg { width: 17px; height: 17px; stroke: #fff; }
.search { width: 220px; height: 26px; display: flex; align-items: center; background: #fff; border: 1px solid #777; padding: 0 2px 0 0; }
.search input { flex: 1; min-width: 0; border: 0; outline: 0; padding: 0; background: none; font: inherit; font-size: 15px; }
.search input::placeholder { color: #a5a5a5; }
.utils .search svg { stroke: #444; }
.learn { display: flex; align-items: center; gap: 4px; }

.ribbon { height: 108px; flex: none; display: flex; padding-top: 5px; border-bottom: 1px solid #dcdcdc; }
.group { height: 99px; display: flex; flex-direction: column; border-right: 1px solid #dcdcdc; flex: none; }
.g1 { width: 95px; } .g2 { width: 248px; } .g3 { width: 234px; } .g4 { width: 346px; } .g5 { width: 160px; } .g6 { width: 80px; }
.body { display: flex; height: 84px; flex: none; }
.big { display: flex; flex-direction: column; align-items: center; padding-top: 1px; white-space: nowrap; line-height: 20px; }
.big svg { width: 32px; height: 32px; margin-bottom: 5px; }
.big .caret { margin-top: 5px; }
.w95 { width: 95px; } .w72 { width: 72px; } .w66 { width: 66px; } .w42 { width: 42px; } .w48 { width: 48px; } .w80 { width: 80px; }
.g2 .body { padding-left: 3px; } .g3 .body { padding-left: 7px; } .g4 .body, .g5 .body { padding-left: 4px; }
.grid { display: grid; grid-auto-rows: 38px; }
.c3 { grid-template-columns: repeat(3, 34px); margin: 0 0 0 -2px; }
.c2 { grid-template-columns: repeat(2, 32px); }
.c8 { grid-template-columns: repeat(8, 34px); margin-left: -3px; }
.grid button { display: flex; align-items: center; justify-content: center; }
.grid svg { width: 24px; height: 24px; }
.stack { display: flex; flex-direction: column; gap: 12px; padding: 2px 7px; }
.stack svg { width: 16px; height: 16px; }
.mid { margin-top: 17px; margin-left: 4px; }
.foot { display: flex; align-items: center; height: 15px; flex: none; line-height: 15px; color: #00587e; }
.foot span { flex: 1; text-align: center; }
.foot .caret { margin-right: 9px; }
.rest { flex: 1; display: flex; align-items: flex-end; justify-content: flex-end; padding: 0 6px 9px; }

.selbar { height: 32px; flex: none; display: flex; align-items: center; border-bottom: 1px solid #a0a0a0; }
.menubtn { display: flex; align-items: center; padding-left: 12px; white-space: nowrap; }
.menubtn svg { width: 16px; height: 16px; margin-right: 2px; }
.menubtn .caret { margin: 0 8px 0 7px; }
.vsep { width: 1px; height: 24px; background: #dcdcdc; margin-right: 12px; }
.vsep.far { margin-left: 13px; }
.pick { position: relative; height: 26px; margin-top: 1px; }
.p1 { width: 184px; } .p2 { width: 192px; margin-right: 8px; }
.pick select { appearance: none; width: 100%; height: 26px; border: 1px solid #707070; border-radius: 0; background: #fff; padding: 0 2px; font: inherit; color: inherit; }
.pick .caret { position: absolute; right: 5px; top: 11px; border-left-width: 5px; border-right-width: 5px; border-top-width: 5px; }
.s { width: 18px; margin: 0 9px; }
.p2 ~ .s { margin: 0 9px 0 0; }
.p2 ~ .s.end { margin-right: 6px; }
.s svg { width: 17px; height: 17px; }
.last { margin: 8px 6px 0 auto; }

.work { flex: 1; min-height: 0; display: flex; border-bottom: 1px solid #a0a0a0; }
.rail { width: 37px; flex: none; background: #dcdcdc; border-right: 1px solid #a0a0a0; display: flex; flex-direction: column; }
.rail button { height: 48px; display: flex; align-items: center; justify-content: center; margin-left: 3px; flex: none; }
.rail .opt { height: 36px; margin-left: 0; }
.rail .sel { background: #fff; border: 1px solid #a0a0a0; border-right: 0; margin-right: -1px; }
.rail svg { width: 24px; height: 24px; }

.panel { width: 376px; flex: none; border-right: 1px solid #a0a0a0; padding: 0 10px 6px 8px; display: flex; flex-direction: column; }
.phead { height: 30px; display: flex; align-items: center; padding: 0 2px 2px 0; flex: none; margin-left: -2px; }
.phead svg { width: 16px; height: 16px; margin-right: 4px; }
.phead h2 { margin: 0; font-size: 15px; line-height: 20px; font-weight: 400; flex: 1; }
.maxi { width: 12px; height: 11px; border: 1px solid #111; border-top-width: 2px; }
.treebox { flex: 1; min-height: 0; border: 1px solid #dcdcdc; display: flex; flex-direction: column; }
.treeview { flex: 1; min-height: 0; overflow: hidden; position: relative; }
table { width: 100%; table-layout: fixed; border-collapse: separate; border-spacing: 0; font-size: 15px; line-height: 20px; }
.c30 { width: 30px; } .c46 { width: 45px; }
th { height: 24px; padding: 0 0 0 6px; text-align: left; font-weight: 400; background: #f0f0f0; border-right: 1px solid #dcdcdc; border-bottom: 1px solid #d0d0d0; white-space: nowrap; }
.asc { display: inline-block; border: 5px solid transparent; border-bottom-color: #111; border-top: 0; margin: 0 0 4px 19px; }
td { height: 24px; padding: 0; border-right: 1px solid #e6e6e6; border-bottom: 1px solid #e6e6e6; }
th:last-child, td:last-child { border-right: 0; }
tbody tr:nth-child(even) { background: #f9f9f9; }
.node { display: flex; align-items: center; height: 23px; }
.node svg { width: 16px; height: 16px; }
.exp { width: 11px; height: 11px; margin-right: 4px; flex: none; }
.exp.box { border: 1px solid #d5d5d5; background: linear-gradient(#222, #222) center / 7px 1px no-repeat #fff; }
.exp.plus { background: linear-gradient(#222, #222) center / 7px 1px no-repeat, linear-gradient(#222, #222) center / 1px 7px no-repeat #fff; }
.name { margin-left: 3px; white-space: nowrap; }
.name.bold { font-weight: 700; }
.cell { width: 16px; height: 16px; margin-left: 5px; }
.links { position: absolute; left: 0; top: 24px; pointer-events: none; stroke: #999; stroke-dasharray: 1 1; overflow: hidden; }
.hscroll { height: 20px; flex: none; background: #f0f0f0; display: flex; align-items: center; }
.hscroll svg { width: 8px; height: 12px; margin: 0 6px; stroke: #444; stroke-width: 2; }
.track { flex: 1; height: 18px; }
.track i { display: block; width: 81%; height: 18px; background: #cdcdcd; }
.splitter { height: 8px; flex: none; margin-top: 3px; border: 1px solid #a0a0a0; background: #dcdcdc; }
.acc { height: 28px; padding-top: 2px; flex: none; display: flex; align-items: center; font-size: 18px; line-height: 22px; color: #005f87; border-bottom: 2px solid #d0d0d0; }
.splitter + .acc { height: 30px; padding-top: 4px; }
.acc i { border: 6px solid transparent; border-left-color: #005f87; border-right: 0; margin: 0 11px; }

.view { flex: 1; min-width: 0; display: flex; flex-direction: column; padding: 0 0 1px 1px; }
.doctabs { border-bottom: 2px solid #005f87; height: 30px; flex: none; display: flex; }
.doctab { background: #005f87; color: #fff; display: flex; align-items: center; padding: 0 6px 0 7px; font-size: 16px; }
.doctab svg { width: 14px; height: 16px; }
.doctab span { margin: 0 6px 0 5px; }
.doctab svg.sm { width: 10px; height: 12px; }
.doctab button svg { width: 9px; height: 9px; margin-left: 5px; }
.canvas { flex: 1; min-height: 0; border: 1px solid #808080; position: relative; overflow: hidden; margin-left: 1px; }
.sheet { width: 100%; }
.thin { fill: none; stroke: #111; stroke-width: 1; }
.blank { stroke: #333; }
.bold2, .obj { fill: none; stroke: #000; stroke-width: 2; }
.frame { fill: none; stroke: #808080; }
.center { fill: none; stroke: #222; stroke-width: 1; }
.sheet > path:not([class]), .sheet text { fill: #000; }
.cad { font-family: "Noto Sans CJK SC", sans-serif; font-size: 11px; }
.arial { font-family: "Liberation Sans", Arial, sans-serif; }
.meter { position: absolute; right: 1px; bottom: 62px; width: 10px; height: 73px; border-radius: 5px; overflow: hidden; background: #a9a9a9; }
.meter i { display: block; margin-top: 21px; height: 52px; background: linear-gradient(#20cf72 60%, #80f48a); border-radius: 0 0 5px 5px; }
.status { height: 22px; flex: none; padding: 1px 3px; font-weight: 700; line-height: 20px; white-space: nowrap; }

.ime { position: absolute; right: 75px; bottom: 2px; height: 38px; border-radius: 8px; background: #fff; box-shadow: 0 0 4px rgba(0, 0, 0, .25); display: flex; align-items: center; gap: 13px; padding: 0 9px 0 11px; }
.ime svg { width: 24px; height: 24px; fill: #111; }
.ime i { width: 1px; height: 24px; background: #ccc; margin: 0 -2px; }
.ime .line { fill: none; stroke: #111; stroke-width: 2; }
.ime .zh { font-size: 20px; font-weight: 700; line-height: 24px; width: 20px; }
.mark { position: absolute; right: 2px; bottom: 8px; font: 36px/48px "Liberation Sans", "Noto Sans CJK SC", sans-serif; color: rgba(255, 255, 255, .7); text-shadow: 1px 1px 2px rgba(0, 0, 0, .4); white-space: nowrap; pointer-events: none; }
</style>
